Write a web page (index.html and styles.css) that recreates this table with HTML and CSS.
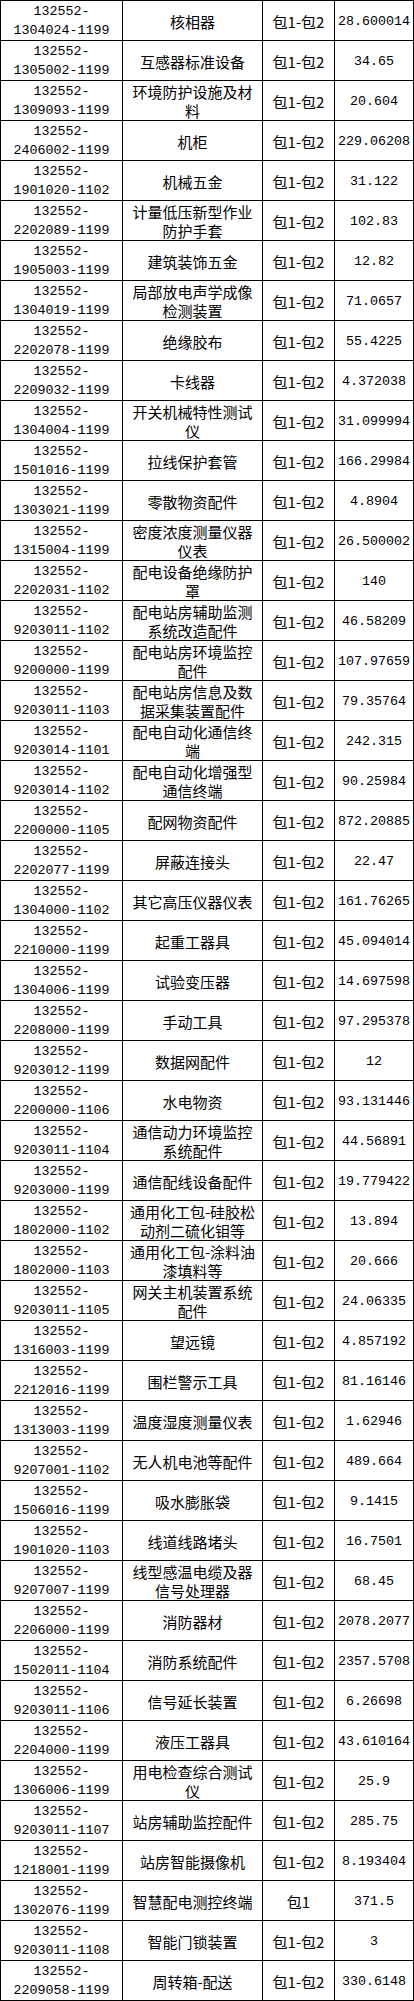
FILE: index.html
```html
<!DOCTYPE html>
<html lang="zh-CN">
<head>
<meta charset="utf-8">
<title>物资清单</title>
<link rel="stylesheet" href="styles.css">
</head>
<body>
<div class="sheet">
<div class="row"><div class="cell code">132552-<br>1304024-1199</div><div class="cell name">核相器</div><div class="cell pkg">包1-包2</div><div class="cell num">28.600014</div></div>
<div class="row"><div class="cell code">132552-<br>1305002-1199</div><div class="cell name">互感器标准设备</div><div class="cell pkg">包1-包2</div><div class="cell num">34.65</div></div>
<div class="row"><div class="cell code">132552-<br>1309093-1199</div><div class="cell name">环境防护设施及材料</div><div class="cell pkg">包1-包2</div><div class="cell num">20.604</div></div>
<div class="row"><div class="cell code">132552-<br>2406002-1199</div><div class="cell name">机柜</div><div class="cell pkg">包1-包2</div><div class="cell num">229.06208</div></div>
<div class="row"><div class="cell code">132552-<br>1901020-1102</div><div class="cell name">机械五金</div><div class="cell pkg">包1-包2</div><div class="cell num">31.122</div></div>
<div class="row"><div class="cell code">132552-<br>2202089-1199</div><div class="cell name">计量低压新型作业防护手套</div><div class="cell pkg">包1-包2</div><div class="cell num">102.83</div></div>
<div class="row"><div class="cell code">132552-<br>1905003-1199</div><div class="cell name">建筑装饰五金</div><div class="cell pkg">包1-包2</div><div class="cell num">12.82</div></div>
<div class="row"><div class="cell code">132552-<br>1304019-1199</div><div class="cell name">局部放电声学成像检测装置</div><div class="cell pkg">包1-包2</div><div class="cell num">71.0657</div></div>
<div class="row"><div class="cell code">132552-<br>2202078-1199</div><div class="cell name">绝缘胶布</div><div class="cell pkg">包1-包2</div><div class="cell num">55.4225</div></div>
<div class="row"><div class="cell code">132552-<br>2209032-1199</div><div class="cell name">卡线器</div><div class="cell pkg">包1-包2</div><div class="cell num">4.372038</div></div>
<div class="row"><div class="cell code">132552-<br>1304004-1199</div><div class="cell name">开关机械特性测试仪</div><div class="cell pkg">包1-包2</div><div class="cell num">31.099994</div></div>
<div class="row"><div class="cell code">132552-<br>1501016-1199</div><div class="cell name">拉线保护套管</div><div class="cell pkg">包1-包2</div><div class="cell num">166.29984</div></div>
<div class="row"><div class="cell code">132552-<br>1303021-1199</div><div class="cell name">零散物资配件</div><div class="cell pkg">包1-包2</div><div class="cell num">4.8904</div></div>
<div class="row"><div class="cell code">132552-<br>1315004-1199</div><div class="cell name">密度浓度测量仪器仪表</div><div class="cell pkg">包1-包2</div><div class="cell num">26.500002</div></div>
<div class="row"><div class="cell code">132552-<br>2202031-1102</div><div class="cell name">配电设备绝缘防护罩</div><div class="cell pkg">包1-包2</div><div class="cell num">140</div></div>
<div class="row"><div class="cell code">132552-<br>9203011-1102</div><div class="cell name">配电站房辅助监测系统改造配件</div><div class="cell pkg">包1-包2</div><div class="cell num">46.58209</div></div>
<div class="row"><div class="cell code">132552-<br>9200000-1199</div><div class="cell name">配电站房环境监控配件</div><div class="cell pkg">包1-包2</div><div class="cell num">107.97659</div></div>
<div class="row"><div class="cell code">132552-<br>9203011-1103</div><div class="cell name">配电站房信息及数据采集装置配件</div><div class="cell pkg">包1-包2</div><div class="cell num">79.35764</div></div>
<div class="row"><div class="cell code">132552-<br>9203014-1101</div><div class="cell name">配电自动化通信终端</div><div class="cell pkg">包1-包2</div><div class="cell num">242.315</div></div>
<div class="row"><div class="cell code">132552-<br>9203014-1102</div><div class="cell name">配电自动化增强型通信终端</div><div class="cell pkg">包1-包2</div><div class="cell num">90.25984</div></div>
<div class="row"><div class="cell code">132552-<br>2200000-1105</div><div class="cell name">配网物资配件</div><div class="cell pkg">包1-包2</div><div class="cell num">872.20885</div></div>
<div class="row"><div class="cell code">132552-<br>2202077-1199</div><div class="cell name">屏蔽连接头</div><div class="cell pkg">包1-包2</div><div class="cell num">22.47</div></div>
<div class="row"><div class="cell code">132552-<br>1304000-1102</div><div class="cell name">其它高压仪器仪表</div><div class="cell pkg">包1-包2</div><div class="cell num">161.76265</div></div>
<div class="row"><div class="cell code">132552-<br>2210000-1199</div><div class="cell name">起重工器具</div><div class="cell pkg">包1-包2</div><div class="cell num">45.094014</div></div>
<div class="row"><div class="cell code">132552-<br>1304006-1199</div><div class="cell name">试验变压器</div><div class="cell pkg">包1-包2</div><div class="cell num">14.697598</div></div>
<div class="row"><div class="cell code">132552-<br>2208000-1199</div><div class="cell name">手动工具</div><div class="cell pkg">包1-包2</div><div class="cell num">97.295378</div></div>
<div class="row"><div class="cell code">132552-<br>9203012-1199</div><div class="cell name">数据网配件</div><div class="cell pkg">包1-包2</div><div class="cell num">12</div></div>
<div class="row"><div class="cell code">132552-<br>2200000-1106</div><div class="cell name">水电物资</div><div class="cell pkg">包1-包2</div><div class="cell num">93.131446</div></div>
<div class="row"><div class="cell code">132552-<br>9203011-1104</div><div class="cell name">通信动力环境监控系统配件</div><div class="cell pkg">包1-包2</div><div class="cell num">44.56891</div></div>
<div class="row"><div class="cell code">132552-<br>9203000-1199</div><div class="cell name">通信配线设备配件</div><div class="cell pkg">包1-包2</div><div class="cell num">19.779422</div></div>
<div class="row"><div class="cell code">132552-<br>1802000-1102</div><div class="cell name">通用化工包-硅胶松动剂二硫化钼等</div><div class="cell pkg">包1-包2</div><div class="cell num">13.894</div></div>
<div class="row"><div class="cell code">132552-<br>1802000-1103</div><div class="cell name">通用化工包-涂料油漆填料等</div><div class="cell pkg">包1-包2</div><div class="cell num">20.666</div></div>
<div class="row"><div class="cell code">132552-<br>9203011-1105</div><div class="cell name">网关主机装置系统配件</div><div class="cell pkg">包1-包2</div><div class="cell num">24.06335</div></div>
<div class="row"><div class="cell code">132552-<br>1316003-1199</div><div class="cell name">望远镜</div><div class="cell pkg">包1-包2</div><div class="cell num">4.857192</div></div>
<div class="row"><div class="cell code">132552-<br>2212016-1199</div><div class="cell name">围栏警示工具</div><div class="cell pkg">包1-包2</div><div class="cell num">81.16146</div></div>
<div class="row"><div class="cell code">132552-<br>1313003-1199</div><div class="cell name">温度湿度测量仪表</div><div class="cell pkg">包1-包2</div><div class="cell num">1.62946</div></div>
<div class="row"><div class="cell code">132552-<br>9207001-1102</div><div class="cell name">无人机电池等配件</div><div class="cell pkg">包1-包2</div><div class="cell num">489.664</div></div>
<div class="row"><div class="cell code">132552-<br>1506016-1199</div><div class="cell name">吸水膨胀袋</div><div class="cell pkg">包1-包2</div><div class="cell num">9.1415</div></div>
<div class="row"><div class="cell code">132552-<br>1901020-1103</div><div class="cell name">线道线路堵头</div><div class="cell pkg">包1-包2</div><div class="cell num">16.7501</div></div>
<div class="row"><div class="cell code">132552-<br>9207007-1199</div><div class="cell name">线型感温电缆及器信号处理器</div><div class="cell pkg">包1-包2</div><div class="cell num">68.45</div></div>
<div class="row"><div class="cell code">132552-<br>2206000-1199</div><div class="cell name">消防器材</div><div class="cell pkg">包1-包2</div><div class="cell num">2078.2077</div></div>
<div class="row"><div class="cell code">132552-<br>1502011-1104</div><div class="cell name">消防系统配件</div><div class="cell pkg">包1-包2</div><div class="cell num">2357.5708</div></div>
<div class="row"><div class="cell code">132552-<br>9203011-1106</div><div class="cell name">信号延长装置</div><div class="cell pkg">包1-包2</div><div class="cell num">6.26698</div></div>
<div class="row"><div class="cell code">132552-<br>2204000-1199</div><div class="cell name">液压工器具</div><div class="cell pkg">包1-包2</div><div class="cell num">43.610164</div></div>
<div class="row"><div class="cell code">132552-<br>1306006-1199</div><div class="cell name">用电检查综合测试仪</div><div class="cell pkg">包1-包2</div><div class="cell num">25.9</div></div>
<div class="row"><div class="cell code">132552-<br>9203011-1107</div><div class="cell name">站房辅助监控配件</div><div class="cell pkg">包1-包2</div><div class="cell num">285.75</div></div>
<div class="row"><div class="cell code">132552-<br>1218001-1199</div><div class="cell name">站房智能摄像机</div><div class="cell pkg">包1-包2</div><div class="cell num">8.193404</div></div>
<div class="row"><div class="cell code">132552-<br>1302076-1199</div><div class="cell name">智慧配电测控终端</div><div class="cell pkg">包1</div><div class="cell num">371.5</div></div>
<div class="row"><div class="cell code">132552-<br>9203011-1108</div><div class="cell name">智能门锁装置</div><div class="cell pkg">包1-包2</div><div class="cell num">3</div></div>
<div class="row"><div class="cell code">132552-<br>2209058-1199</div><div class="cell name">周转箱-配送</div><div class="cell pkg">包1-包2</div><div class="cell num">330.6148</div></div>
</div>
</body>
</html>
```

FILE: styles.css
```css
* {
  box-sizing: border-box;
}

html, body {
  margin: 0;
  padding: 0;
  background: #ffffff;
}

body {
  width: 414px;
  color: #000000;
  font-family: "Noto Sans CJK SC", "Liberation Sans", sans-serif;
  font-size: 15px;
}

.sheet {
  width: 414px;
  border-top: 1px solid #000000;
  border-left: 1px solid #000000;
}

.row {
  display: grid;
  grid-template-columns: 122px 140px 72px 79px;
  height: 40px;
}

.cell {
  display: flex;
  align-items: center;
  justify-content: center;
  text-align: center;
  border-right: 1px solid #000000;
  border-bottom: 1px solid #000000;
  line-height: 19px;
  padding: 1px 3px 0;
  overflow: hidden;
  white-space: normal;
}

.code,
.num {
  font-family: "Liberation Mono", "DejaVu Sans Mono", monospace;
  font-size: 13.33px;
  letter-spacing: 0;
}

.num {
  padding: 1px 0 0;
}

.name {
  font-family: "Noto Sans CJK SC", sans-serif;
  font-size: 15px;
  line-break: anywhere;
}

.pkg {
  font-family: "Noto Sans CJK SC", sans-serif;
  font-size: 15px;
}
```
